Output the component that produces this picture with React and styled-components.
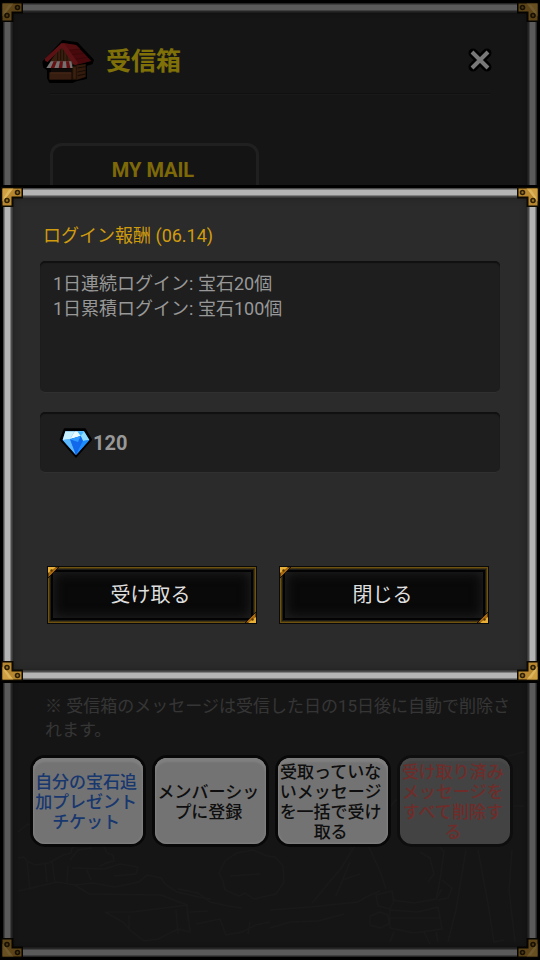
import React, { useState } from "react";
import styled, { createGlobalStyle, css } from "styled-components";

const GlobalStyle = createGlobalStyle`
  * {
    box-sizing: border-box;
  }
  body {
    margin: 0;
    background: #000;
    font-family: Roboto, "Noto Sans CJK JP", sans-serif;
  }
  button {
    font-family: inherit;
    cursor: pointer;
  }
`;

const Frame = styled.div`
  position: relative;
  border: 3px solid #000;
  padding: 10px;
  background: #2b2b2b;
  box-shadow: inset 0 0 0 1px #4a4a4a, inset 0 0 0 2px #808080,
    inset 0 0 0 7px #b4b4b4, inset 0 0 0 8px #808080, inset 0 0 0 9px #4c4c4c,
    inset 0 0 0 10px #3a3a3a, inset 0 0 6px 10px #1f1f1f;
`;

const CornerSvg = styled.svg`
  position: absolute;
  z-index: 1;
  width: 22px;
  height: 20px;
  ${({ $v }) => ($v === "top" ? "top: -1px;" : "bottom: -1px;")}
  ${({ $h }) => ($h === "left" ? "left: -2px;" : "right: -2px;")}
  transform: scale(
    ${({ $h }) => ($h === "left" ? 1 : -1)},
    ${({ $v }) => ($v === "top" ? 1 : -1)}
  );
`;

const Page = styled(Frame)`
  display: flex;
  flex-direction: column;
  min-height: 100vh;
`;

const Header = styled.header`
  display: flex;
  align-items: center;
  gap: 12px;
  margin: 0 37px;
  padding: 27px 0 10px;
  border-bottom: 1px solid #202020;
  box-shadow: 0 1px 0 #323232;
`;

const HouseSvg = styled.svg`
  width: 52px;
  height: 43px;
  margin-left: -8px;
  flex: none;
`;

const PageTitle = styled.h1`
  flex: 1;
  margin: 0;
  font-size: 25px;
  line-height: 36px;
  font-weight: 700;
  color: #ffe010;
`;

const CloseButton = styled.button`
  width: 28px;
  height: 28px;
  margin: 0 -4px 4px 0;
  padding: 0;
  border: 0;
  background: none;
  svg {
    display: block;
  }
`;

const Tabs = styled.div`
  display: flex;
  margin: 49px 37px 0;
`;

const Tab = styled.button`
  width: 209px;
  height: 50px;
  padding: 0 3px 0 0;
  border: 3px solid #404040;
  border-bottom: 0;
  border-radius: 12px 12px 0 0;
  background: #282828;
  color: #fad210;
  font-size: 20px;
  line-height: 24px;
  font-weight: 700;
`;

const MailList = styled.div`
  flex: 1;
  margin: 0 27px;
`;

const Note = styled.p`
  margin: 12px 13px 16px 32px;
  font-size: 17px;
  line-height: 24px;
  color: #6a6a6a;
`;

const Actions = styled.div`
  position: relative;
  z-index: 1;
  display: flex;
  gap: 12px;
  margin: 0 17px 103px 20px;
`;

const ActionButton = styled.button`
  flex: 1;
  min-width: 0;
  height: 86px;
  padding: 2px 4px 0 0;
  border: 0;
  border-radius: 12px;
  background: #e6e6e6;
  box-shadow: 0 0 0 3px #101010, inset 0 4px 2px #fff, inset 0 0 2px 1px #fff;
  color: ${({ $color }) => $color};
  font-size: 17px;
  line-height: 20px;
  font-weight: 500;
  ${({ disabled }) =>
    disabled &&
    css`
      background: #868686;
      box-shadow: 0 0 0 3px #1c1c1c, inset 0 3px 2px #929292;
      cursor: default;
    `}
`;

const SceneSvg = styled.svg`
  position: absolute;
  left: 10px;
  bottom: 10px;
  width: calc(100% - 20px);
  height: 197px;
  fill: none;
  stroke: #323232;
  stroke-width: 1.5;
`;

const Overlay = styled.div`
  position: absolute;
  inset: 0;
  z-index: 2;
  padding-top: 185px;
  background: rgba(0, 0, 0, 0.5);
`;

const Dialog = styled(Frame)`
  padding: 35px 37px 56px 37px;
`;

const DialogTitle = styled.h2`
  margin: 0 3px;
  font-size: 18px;
  line-height: 26px;
  font-weight: 400;
  color: #d09c0e;
`;

const Panel = styled.div`
  border-radius: 5px;
  background: #1e1e1e;
  box-shadow: inset 0 2px 1px #101010, 0 1px 0 #303030;
  color: #989898;
`;

const Message = styled(Panel)`
  min-height: 131px;
  margin-top: 12px;
  padding: 10px 13px;
  font-size: 18px;
  line-height: 25px;
`;

const Reward = styled(Panel)`
  display: flex;
  align-items: center;
  gap: 1px;
  height: 60px;
  margin-top: 20px;
  padding: 1px 19px 0;
  font-size: 20px;
  font-weight: 700;
`;

const DialogButtons = styled.div`
  display: flex;
  gap: 22px;
  margin: 94px 11px 0 7px;
`;

const DarkButton = styled.button`
  position: relative;
  flex: 1;
  height: 58px;
  padding: 0 3px 0 0;
  border: 1px solid #0a0a0a;
  background: #090909;
  box-shadow: inset 0 0 0 1px #6e520f, inset 0 0 0 2px #453611,
    inset 0 0 0 3px #1e1c18, inset 0 0 0 5px #030303,
    inset 0 0 12px 6px #202020;
  color: #dedede;
  font-size: 20px;
  line-height: 28px;
`;

const GoldTip = styled.svg`
  position: absolute;
  width: 12px;
  height: 12px;
  ${({ $end }) =>
    $end ? "right: 0; bottom: 0; transform: rotate(180deg);" : "left: 0; top: 0;"}
`;

const Corner = ({ v, h }) => (
  <CornerSvg $v={v} $h={h} viewBox="0 0 22 20" aria-hidden="true">
    <path d="M0.5 0.5h21v10h-10v9h-11z" fill="#b88830" stroke="#0c0802" strokeWidth="2" />
    <path d="M1.5 1.5h11l-11 13z" fill="#cf9f42" />
    <path d="M8 2.5l3.5 0-8.5 11 0-3.5z" fill="#dcb45c" />
    <g fill="#94702a" stroke="#2c1f05" strokeWidth="1.6">
      <circle cx="16.5" cy="5.5" r="2" />
      <circle cx="6" cy="13.5" r="2" />
    </g>
  </CornerSvg>
);

const Corners = () => (
  <>
    <Corner v="top" h="left" />
    <Corner v="top" h="right" />
    <Corner v="bottom" h="left" />
    <Corner v="bottom" h="right" />
  </>
);

const House = () => (
  <HouseSvg viewBox="125 122 156 129" aria-hidden="true">
    <path
      d="M187 124l44 7 48 51-4 11-17 5v39l-30 7-12 5h-68l-6-13v-24l-12-9-2-15 8-9z"
      fill="#000"
      stroke="#000"
      strokeWidth="4"
      strokeLinejoin="round"
    />
    <path d="M187 134l35 52-7 14h-56l-8-16z" fill="#6e3d1e" />
    <path d="M172 154v30M181 144v40M190 142v42M200 156v30" stroke="#3c1f0e" strokeWidth="3" />
    <path d="M187 131l40 6 46 48-42 11z" fill="#8e1318" />
    <path d="M187 131l40 6 12 12-38 4z" fill="#a01a1e" />
    <path d="M201 153l38-4M212 166l40-4M221 180l42-6" stroke="#6d0c12" strokeWidth="2" />
    <path d="M184 131l9 3 40 57-5 6-8-1-35-51-43 43-7-3-2-7z" fill="#b8252a" />
    <path d="M152 207h64v16h-64z" fill="#1f1511" />
    <path d="M216 200l40-6v39l-26 8h-14z" fill="#643619" />
    <path d="M232 206l24-4M232 218l24-5M232 229l24-5" stroke="#2b150a" strokeWidth="3" />
    <path d="M217 202h11v38h-11z" fill="#74401f" stroke="#2b150a" strokeWidth="2" />
    <path d="M147 219h67v22h-67z" fill="#6c3a20" />
    <path d="M150 219h62v4h-62z" fill="#854a2a" />
    <path d="M151 186h62l4 20h-79z" fill="#e8e4e0" />
    <path d="M160 186h10l-8 20h-11zM179 186h9l-2 20h-11zM197 186h9l4 20h-11z" fill="#c81f22" />
  </HouseSvg>
);

const Gem = () => (
  <svg width="33" height="30" viewBox="88 85 99 90" aria-hidden="true">
    <path
      d="M105 89h61l18 31-45 51-46-51z"
      fill="#000"
      stroke="#000"
      strokeWidth="6"
      strokeLinejoin="round"
    />
    <path d="M107 95h56l16 26-40 45-40-45z" fill="#1f8dff" />
    <path d="M107 95h28l-14 24-22 2z" fill="#c7f1ff" />
    <path d="M135 95h28l-10 14-32 10z" fill="#e9fbff" />
    <path d="M163 95l16 26-19 3-7-15z" fill="#8edcff" />
    <path d="M143 95l20 0-10 14z" fill="#3fb4ff" />
    <path d="M99 121l22-2 18 47z" fill="#5cb8ff" />
    <path d="M121 119l32-10 7 15-21 42z" fill="#1268ea" />
    <path d="M121 119l32-10-8 18z" fill="#2f9bff" />
    <path d="M160 124l19-3-40 45z" fill="#1c8cff" />
  </svg>
);

const Scene = () => (
  <SceneSvg viewBox="13 750 514 197" preserveAspectRatio="none" aria-hidden="true">
    <path d="M18 858l6-1 3 4 8 4 14-2 14-8 8-2 1-5 8-3 4-6 4-1 8 8 7-1 4 8 6 2 1 6-8 2-6 3" />
    <path d="M27 862l3 28M45 862l2 20M52 860l3 22M68 866l-1 16M87 870l4 10M72 868l32 1 16-5 18 3-2 7-22 2" />
    <path d="M18 891l22-5 17-4 18 3 18-2 22 4 24-5 8-7 14 3 4 6 12 8 22 5 12 2M75 885l14 9 72 1 26 10" />
    <path d="M105 912l28 0 23-3 31-4 3 27-12-3M105 912l18 10 7 8 14 11 14-2 20-10M129 915v14M176 910l2 24M187 905l1 16" />
    <path d="M178 889l20 4 12 9 18 4 14 2M190 912l18-1M196 924l24-5 6 16 16-3 14-7 14-3M250 922l-2 12" />
    <path d="M245 893l-6 3-14-6-2-9-4-8 6-12 12-8 16-3 14 6 8 1 8 9 1 16-8 12-14 3-8 2zM230 876l30-2" />
    <path d="M270 910l40-3 48-5 10-6 12-5M270 928l20-6 28-1 26-7M312 903l30-36 12-20 12-6M336 896l14-34M342 880l18-6M366 841l14 30 6 18" />
    <path d="M376 895l16-4 2 10-4 8-12-3zM392 900l22 3 22-4 6-10M380 912l-10 4v9l10 3 9-4-1-9zM390 910l28 2 20-5 4 22-28 4-24-5zM390 918l50 0M394 932l-4 10M424 932l6 12M436 932l2 10" />
    <path d="M360 800l10 24 18 18M350 850l10-22 24-14M384 814l12-14 20-4 20 6 8 16-12 24M420 852l10 6 4 16-6 8M436 842l8 10-4 28-4 20M442 880l10 8-4 10-10 2" />
    <path d="M466 850l-10 60-8 32M478 850l10 54 6 38 10-2M512 850l-3 40 6 52M500 758l24-6M508 806l16 0M18 832l10-8 12 6M70 860l8-10 14-2" />
  </SceneSvg>
);

const App = () => {
  const [open, setOpen] = useState(true);

  return (
    <>
      <GlobalStyle />
      <Page>
        <Corners />
        <Scene />
        <Header>
          <House />
          <PageTitle>受信箱</PageTitle>
          <CloseButton aria-label="閉じる">
            <svg width="28" height="28" viewBox="0 0 28 28" strokeLinecap="round">
              <path d="M7 7l14 14M21 7l-14 14" stroke="#000" strokeWidth="9" />
              <path d="M6 6l16 16M22 6l-16 16" stroke="#f0f0f0" strokeWidth="4" strokeLinecap="butt" />
            </svg>
          </CloseButton>
        </Header>
        <Tabs>
          <Tab>MY MAIL</Tab>
        </Tabs>
        <MailList />
        <Note>※ 受信箱のメッセージは受信した日の15日後に自動で削除されます。</Note>
        <Actions>
          <ActionButton $color="#306edc">自分の宝石追加プレゼントチケット</ActionButton>
          <ActionButton $color="#1c1c1c">メンバーシップに登録</ActionButton>
          <ActionButton $color="#1c1c1c">受取っていないメッセージを一括で受け取る</ActionButton>
          <ActionButton $color="#dc5a54" disabled>
            受け取り済みメッセージをすべて削除する
          </ActionButton>
        </Actions>
      </Page>
      {open && (
        <Overlay>
          <Dialog role="dialog" aria-modal="true" aria-labelledby="mail-title">
            <Corners />
            <DialogTitle id="mail-title">ログイン報酬 (06.14)</DialogTitle>
            <Message>
              1日連続ログイン: 宝石20個
              <br />
              1日累積ログイン: 宝石100個
            </Message>
            <Reward>
              <Gem />
              120
            </Reward>
            <DialogButtons>
              {["受け取る", "閉じる"].map((label) => (
                <DarkButton key={label} onClick={() => setOpen(false)}>
                  {label}
                  {[false, true].map((end) => (
                    <GoldTip key={String(end)} $end={end} viewBox="0 0 12 12" aria-hidden="true">
                      <path d="M0 0h11l-11 11z" fill="#a86a10" stroke="#1a1004" />
                      <path d="M0 0h8l-8 6z" fill="#e8b038" />
                      <circle cx="3.5" cy="3.5" r="1.2" fill="#5c3a08" />
                    </GoldTip>
                  ))}
                </DarkButton>
              ))}
            </DialogButtons>
          </Dialog>
        </Overlay>
      )}
    </>
  );
};

export default App;
